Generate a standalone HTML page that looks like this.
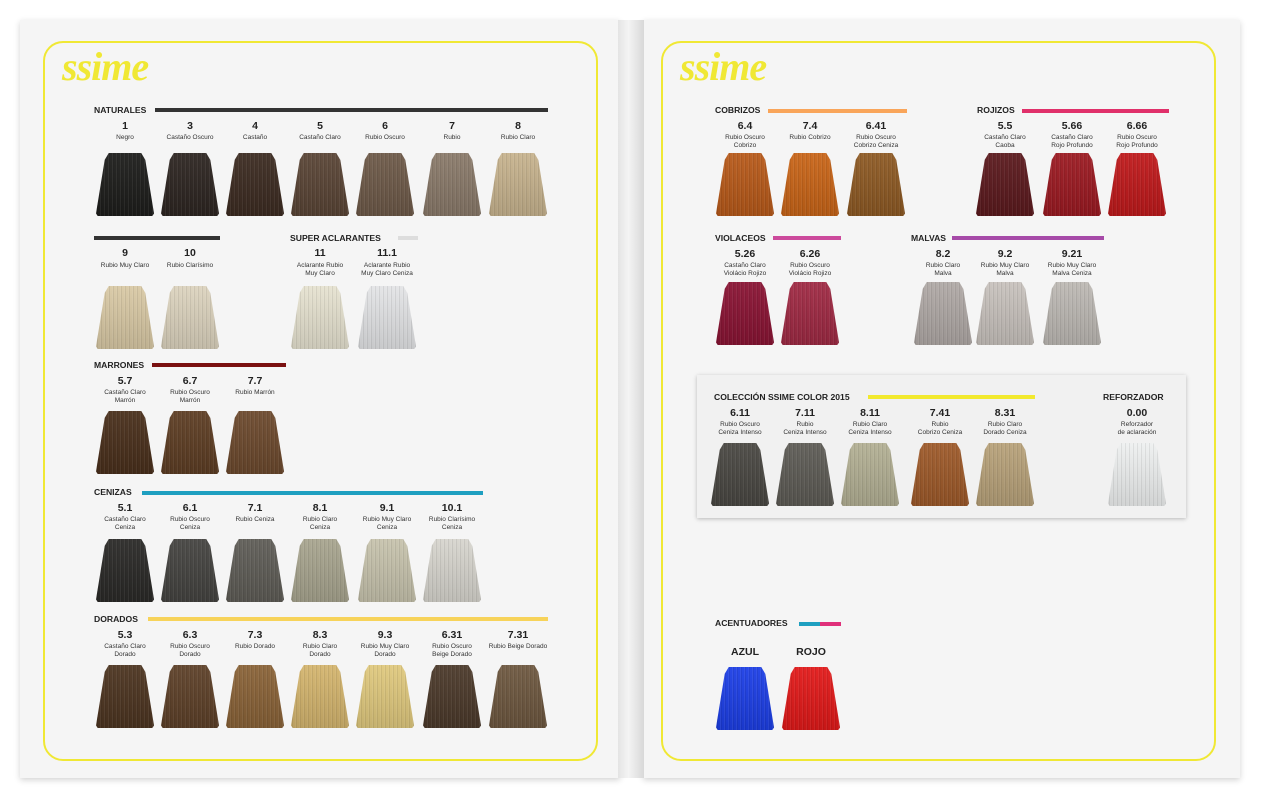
<!DOCTYPE html>
<html><head><meta charset="utf-8">
<style>
*{margin:0;padding:0;box-sizing:border-box}
body{width:1265px;height:800px;background:#fff;position:relative;overflow:hidden;font-family:"Liberation Sans",sans-serif;color:#1a1a1a}
.page{position:absolute;top:20px;height:758px;background:#f5f5f5;box-shadow:0 2px 6px rgba(0,0,0,.18)}
.gut{position:absolute;left:618px;top:20px;width:26px;height:758px;background:linear-gradient(to right,#e4e4e4,#f4f4f4 40%,#e6e6e6 70%,#d8d8d8)}
.frame{position:absolute;border:2px solid #f0e834;border-radius:20px}
.logo{position:absolute;font-family:"Liberation Serif",serif;font-style:italic;font-weight:bold;font-size:40px;color:#f0e834;letter-spacing:-1px}
.h{position:absolute;font-size:8.6px;font-weight:bold;letter-spacing:0;line-height:10px;color:#222}
.bar{position:absolute;height:4px}
.n{position:absolute;width:90px;text-align:center;font-size:10.5px;font-weight:bold;line-height:11px;color:#222}
.t{position:absolute;width:90px;text-align:center;font-size:6.5px;line-height:7.5px;color:#333}
.s{position:absolute;width:58px;height:63px;
clip-path:polygon(22% 0,78% 0,85% 11%,100% 96%,97% 100%,3% 100%,0 96%,15% 11%);
background:repeating-linear-gradient(90deg,rgba(255,255,255,.06) 0 1px,rgba(0,0,0,.07) 1px 2px,transparent 2px 4px),linear-gradient(to bottom,rgba(255,255,255,.05),rgba(0,0,0,.12)),var(--c)}
.box{position:absolute;left:697px;top:375px;width:489px;height:143px;background:#f1f1f1;box-shadow:0 1px 4px rgba(0,0,0,.25)}
</style></head><body>
<div class="page" style="left:20px;width:600px"></div>
<div class="page" style="left:643px;width:597px"></div>
<div class="gut"></div>
<div class="frame" style="left:43px;top:41px;width:555px;height:720px"></div>
<div class="frame" style="left:661px;top:41px;width:555px;height:720px"></div>
<div class="logo" style="left:62px;top:43px">ssime</div>
<div class="logo" style="left:680px;top:43px">ssime</div>

<div class="h" style="left:94px;top:105px">NATURALES</div>
<div class="bar" style="left:155px;top:108px;width:393px;background:#333"></div>
<div class="n" style="left:80px;top:121px">1</div><div class="t" style="left:80px;top:134px">Negro</div><div class="s" style="left:96px;top:153px;--c:#1e1e1c"></div>
<div class="n" style="left:145px;top:121px">3</div><div class="t" style="left:145px;top:134px">Castaño Oscuro</div><div class="s" style="left:161px;top:153px;--c:#2e2622"></div>
<div class="n" style="left:210px;top:121px">4</div><div class="t" style="left:210px;top:134px">Castaño</div><div class="s" style="left:226px;top:153px;--c:#3d2c22"></div>
<div class="n" style="left:275px;top:121px">5</div><div class="t" style="left:275px;top:134px">Castaño Claro</div><div class="s" style="left:291px;top:153px;--c:#5a4536"></div>
<div class="n" style="left:340px;top:121px">6</div><div class="t" style="left:340px;top:134px">Rubio Oscuro</div><div class="s" style="left:356px;top:153px;--c:#6e5a49"></div>
<div class="n" style="left:407px;top:121px">7</div><div class="t" style="left:407px;top:134px">Rubio</div><div class="s" style="left:423px;top:153px;--c:#8a7a6a"></div>
<div class="n" style="left:473px;top:121px">8</div><div class="t" style="left:473px;top:134px">Rubio Claro</div><div class="s" style="left:489px;top:153px;--c:#c7b38e"></div>

<div class="bar" style="left:94px;top:236px;width:126px;background:#333"></div>
<div class="n" style="left:80px;top:248px">9</div><div class="t" style="left:80px;top:262px">Rubio Muy Claro</div><div class="s" style="left:96px;top:286px;--c:#d9c9a5"></div>
<div class="n" style="left:145px;top:248px">10</div><div class="t" style="left:145px;top:262px">Rubio Clarísimo</div><div class="s" style="left:161px;top:286px;--c:#dcd3be"></div>
<div class="h" style="left:290px;top:233px">SUPER ACLARANTES</div>
<div class="bar" style="left:398px;top:236px;width:20px;background:#ddd"></div>
<div class="n" style="left:275px;top:248px">11</div><div class="t" style="left:275px;top:262px">Aclarante Rubio<br>Muy Claro</div><div class="s" style="left:291px;top:286px;--c:#e6e2d0"></div>
<div class="n" style="left:342px;top:248px">11.1</div><div class="t" style="left:342px;top:262px">Aclarante Rubio<br>Muy Claro Ceniza</div><div class="s" style="left:358px;top:286px;--c:#e3e4e6"></div>

<div class="h" style="left:94px;top:360px">MARRONES</div>
<div class="bar" style="left:152px;top:363px;width:134px;background:#7a1010"></div>
<div class="n" style="left:80px;top:376px">5.7</div><div class="t" style="left:80px;top:389px">Castaño Claro<br>Marrón</div><div class="s" style="left:96px;top:411px;--c:#4a301c"></div>
<div class="n" style="left:145px;top:376px">6.7</div><div class="t" style="left:145px;top:389px">Rubio Oscuro<br>Marrón</div><div class="s" style="left:161px;top:411px;--c:#5e3e24"></div>
<div class="n" style="left:210px;top:376px">7.7</div><div class="t" style="left:210px;top:389px">Rubio Marrón</div><div class="s" style="left:226px;top:411px;--c:#6d4a2e"></div>

<div class="h" style="left:94px;top:487px">CENIZAS</div>
<div class="bar" style="left:142px;top:491px;width:341px;background:#1e9fc0"></div>
<div class="n" style="left:80px;top:503px">5.1</div><div class="t" style="left:80px;top:516px">Castaño Claro<br>Ceniza</div><div class="s" style="left:96px;top:539px;--c:#2b2a28"></div>
<div class="n" style="left:145px;top:503px">6.1</div><div class="t" style="left:145px;top:516px">Rubio Oscuro<br>Ceniza</div><div class="s" style="left:161px;top:539px;--c:#454441"></div>
<div class="n" style="left:210px;top:503px">7.1</div><div class="t" style="left:210px;top:516px">Rubio Ceniza</div><div class="s" style="left:226px;top:539px;--c:#5f5d57"></div>
<div class="n" style="left:275px;top:503px">8.1</div><div class="t" style="left:275px;top:516px">Rubio Claro<br>Ceniza</div><div class="s" style="left:291px;top:539px;--c:#a8a58f"></div>
<div class="n" style="left:342px;top:503px">9.1</div><div class="t" style="left:342px;top:516px">Rubio Muy Claro<br>Ceniza</div><div class="s" style="left:358px;top:539px;--c:#c7c3ad"></div>
<div class="n" style="left:407px;top:503px">10.1</div><div class="t" style="left:407px;top:516px">Rubio Clarísimo<br>Ceniza</div><div class="s" style="left:423px;top:539px;--c:#d7d5ce"></div>

<div class="h" style="left:94px;top:614px">DORADOS</div>
<div class="bar" style="left:148px;top:617px;width:400px;background:#f7d35a"></div>
<div class="n" style="left:80px;top:630px">5.3</div><div class="t" style="left:80px;top:643px">Castaño Claro<br>Dorado</div><div class="s" style="left:96px;top:665px;--c:#4d3521"></div>
<div class="n" style="left:145px;top:630px">6.3</div><div class="t" style="left:145px;top:643px">Rubio Oscuro<br>Dorado</div><div class="s" style="left:161px;top:665px;--c:#5e4129"></div>
<div class="n" style="left:210px;top:630px">7.3</div><div class="t" style="left:210px;top:643px">Rubio Dorado</div><div class="s" style="left:226px;top:665px;--c:#8a6338"></div>
<div class="n" style="left:275px;top:630px">8.3</div><div class="t" style="left:275px;top:643px">Rubio Claro<br>Dorado</div><div class="s" style="left:291px;top:665px;--c:#d4b56e"></div>
<div class="n" style="left:340px;top:630px">9.3</div><div class="t" style="left:340px;top:643px">Rubio Muy Claro<br>Dorado</div><div class="s" style="left:356px;top:665px;--c:#e0c97e"></div>
<div class="n" style="left:407px;top:630px">6.31</div><div class="t" style="left:407px;top:643px">Rubio Oscuro<br>Beige Dorado</div><div class="s" style="left:423px;top:665px;--c:#4c3a2b"></div>
<div class="n" style="left:473px;top:630px">7.31</div><div class="t" style="left:473px;top:643px">Rubio Beige Dorado</div><div class="s" style="left:489px;top:665px;--c:#6e5840"></div>

<div class="h" style="left:715px;top:105px">COBRIZOS</div>
<div class="bar" style="left:768px;top:109px;width:139px;background:#f9a55a"></div>
<div class="n" style="left:700px;top:121px">6.4</div><div class="t" style="left:700px;top:134px">Rubio Oscuro<br>Cobrizo</div><div class="s" style="left:716px;top:153px;--c:#b85a1a"></div>
<div class="n" style="left:765px;top:121px">7.4</div><div class="t" style="left:765px;top:134px">Rubio Cobrizo</div><div class="s" style="left:781px;top:153px;--c:#c96518"></div>
<div class="n" style="left:831px;top:121px">6.41</div><div class="t" style="left:831px;top:134px">Rubio Oscuro<br>Cobrizo Ceniza</div><div class="s" style="left:847px;top:153px;--c:#8e5a24"></div>

<div class="h" style="left:977px;top:105px">ROJIZOS</div>
<div class="bar" style="left:1022px;top:109px;width:147px;background:#e0306a"></div>
<div class="n" style="left:960px;top:121px">5.5</div><div class="t" style="left:960px;top:134px">Castaño Claro<br>Caoba</div><div class="s" style="left:976px;top:153px;--c:#5c1a1e"></div>
<div class="n" style="left:1027px;top:121px">5.66</div><div class="t" style="left:1027px;top:134px">Castaño Claro<br>Rojo Profundo</div><div class="s" style="left:1043px;top:153px;--c:#9c1a22"></div>
<div class="n" style="left:1092px;top:121px">6.66</div><div class="t" style="left:1092px;top:134px">Rubio Oscuro<br>Rojo Profundo</div><div class="s" style="left:1108px;top:153px;--c:#c01a1c"></div>

<div class="h" style="left:715px;top:233px">VIOLACEOS</div>
<div class="bar" style="left:773px;top:236px;width:68px;background:#cc4a9c"></div>
<div class="n" style="left:700px;top:249px">5.26</div><div class="t" style="left:700px;top:262px">Castaño Claro<br>Violácio Rojizo</div><div class="s" style="left:716px;top:282px;--c:#8a1434"></div>
<div class="n" style="left:765px;top:249px">6.26</div><div class="t" style="left:765px;top:262px">Rubio Oscuro<br>Violácio Rojizo</div><div class="s" style="left:781px;top:282px;--c:#a02a44"></div>

<div class="h" style="left:911px;top:233px">MALVAS</div>
<div class="bar" style="left:952px;top:236px;width:152px;background:#a64aa8"></div>
<div class="n" style="left:898px;top:249px">8.2</div><div class="t" style="left:898px;top:262px">Rubio Claro<br>Malva</div><div class="s" style="left:914px;top:282px;--c:#b0a9a6"></div>
<div class="n" style="left:960px;top:249px">9.2</div><div class="t" style="left:960px;top:262px">Rubio Muy Claro<br>Malva</div><div class="s" style="left:976px;top:282px;--c:#c8c2bd"></div>
<div class="n" style="left:1027px;top:249px">9.21</div><div class="t" style="left:1027px;top:262px">Rubio Muy Claro<br>Malva Ceniza</div><div class="s" style="left:1043px;top:282px;--c:#bdb9b4"></div>

<div class="box"></div>
<div class="h" style="left:714px;top:392px">COLECCIÓN SSIME COLOR 2015</div>
<div class="bar" style="left:868px;top:395px;width:167px;background:#f2e92e"></div>
<div class="h" style="left:1103px;top:392px">REFORZADOR</div>
<div class="n" style="left:695px;top:408px">6.11</div><div class="t" style="left:695px;top:421px">Rubio Oscuro<br>Ceniza Intenso</div><div class="s" style="left:711px;top:443px;--c:#4a4843"></div>
<div class="n" style="left:760px;top:408px">7.11</div><div class="t" style="left:760px;top:421px">Rubio<br>Ceniza Intenso</div><div class="s" style="left:776px;top:443px;--c:#5e5c56"></div>
<div class="n" style="left:825px;top:408px">8.11</div><div class="t" style="left:825px;top:421px">Rubio Claro<br>Ceniza Intenso</div><div class="s" style="left:841px;top:443px;--c:#b3b094"></div>
<div class="n" style="left:895px;top:408px">7.41</div><div class="t" style="left:895px;top:421px">Rubio<br>Cobrizo Ceniza</div><div class="s" style="left:911px;top:443px;--c:#9e5a2a"></div>
<div class="n" style="left:960px;top:408px">8.31</div><div class="t" style="left:960px;top:421px">Rubio Claro<br>Dorado Ceniza</div><div class="s" style="left:976px;top:443px;--c:#b8a27a"></div>
<div class="n" style="left:1092px;top:408px">0.00</div><div class="t" style="left:1092px;top:421px">Reforzador<br>de aclaración</div><div class="s" style="left:1108px;top:443px;--c:#eef0f0"></div>

<div class="h" style="left:715px;top:618px">ACENTUADORES</div>
<div class="bar" style="left:799px;top:622px;width:21px;background:#1e9fc0"></div>
<div class="bar" style="left:820px;top:622px;width:21px;background:#e0307a"></div>
<div class="n" style="left:700px;top:647px">AZUL</div><div class="s" style="left:716px;top:667px;--c:#1d3fe6"></div>
<div class="n" style="left:766px;top:647px">ROJO</div><div class="s" style="left:782px;top:667px;--c:#e21a1a"></div>
</body></html>
